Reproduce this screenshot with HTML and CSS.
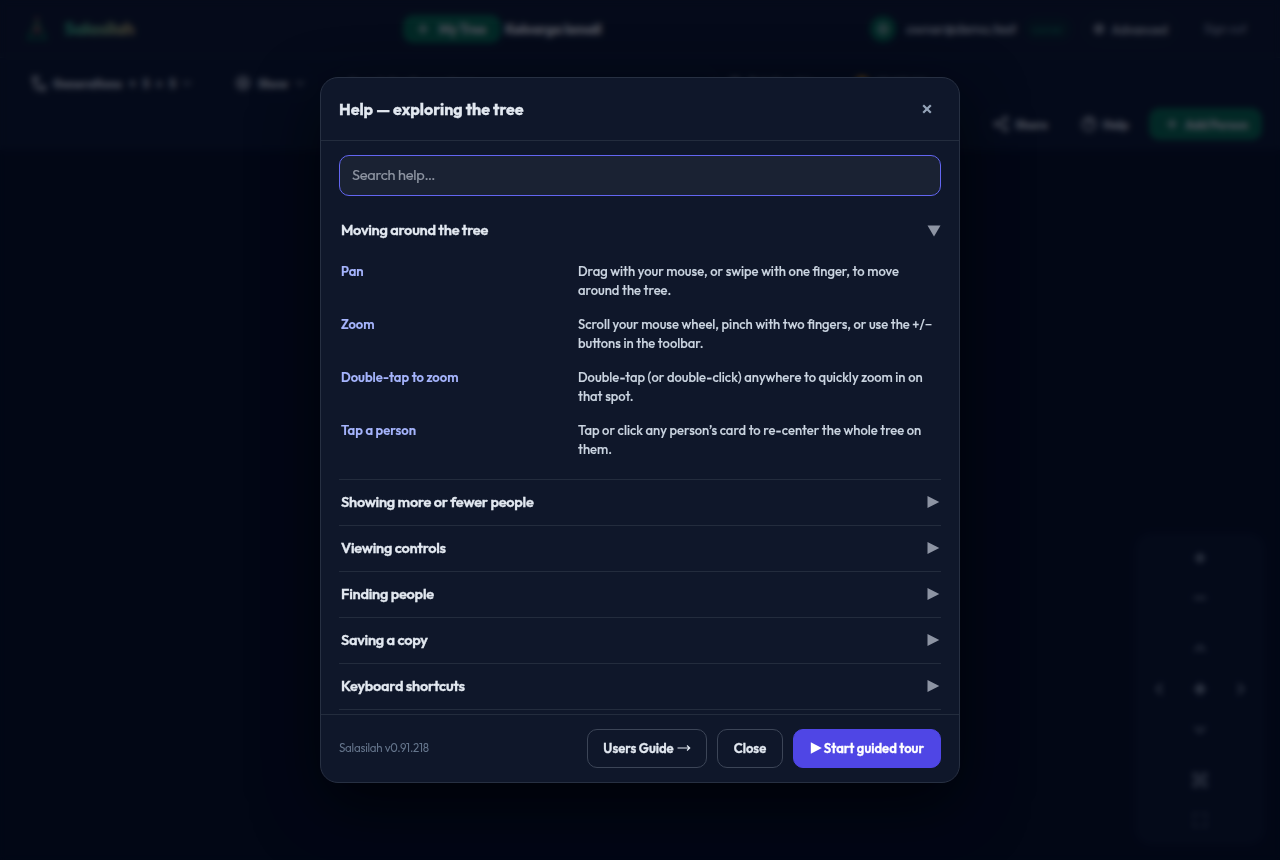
FILE: index.html
```html
<!DOCTYPE html>
<html lang="en">
<head>
<meta charset="utf-8">
<title>Salasilah</title>
<link rel="stylesheet" href="styles.css">
</head>
<body>
<div class="app">
  <header class="topbar">
    <div class="brand">
      <svg class="logo" width="26" height="28" viewBox="0 0 26 28" fill="none" stroke-width="2"><path d="M13 5 4 23h18z" stroke="#067a45"/><circle cx="13" cy="4" r="2" fill="#b45353"/><path d="M13 8v11M9 17l4-5 4 5" stroke="#b45353"/><path d="M3 24h20" stroke="#065f46" stroke-width="2"/></svg>
      <span class="brand-name">Salasilah</span>
    </div>
    <div class="tree-switch"><span class="btn-green my-tree"><svg class="ico" width="12" height="12" viewBox="0 0 12 12"><path d="M6 1v10M1 6h10"/></svg><span>My Tree</span></span><b class="tree-name">Keluarga Ismail</b></div>
    <div class="account">
      <span class="avatar">O</span><span class="mail">owner@demo.test</span><span class="role">owner</span>
      <span class="pill adv"><svg class="ico" width="12" height="12" viewBox="0 0 12 12"><circle cx="6" cy="6" r="4"/><circle cx="6" cy="6" r="1"/></svg>Advanced</span><span class="signout">Sign out</span>
    </div>
  </header>
  <div class="toolbar">
    <div class="tools">
      <span class="pill gen"><svg class="ico" width="16" height="16" viewBox="0 0 16 16"><path d="M2 2h5v4H2zM9 11h5v4H9zM4 6v7h5"/></svg><b class="gen-label">Generations</b><span>↑</span><b>5</b><span>↓</span><b>5</b><svg class="ico dim" width="10" height="10" viewBox="0 0 10 10"><path d="m1 3 4 4 4-4"/></svg></span>
      <span class="pill show"><svg class="ico" width="16" height="16" viewBox="0 0 16 16"><circle cx="8" cy="8" r="6"/><circle cx="8" cy="8" r="2"/></svg><b>Show</b><svg class="ico dim" width="10" height="10" viewBox="0 0 10 10"><path d="m1 3 4 4 4-4"/></svg></span>
      <span class="pill search-pill">Search family members</span>
      <span class="pill legend"><svg class="ico" width="12" height="12" viewBox="0 0 12 12"><circle cx="6" cy="6" r="4"/></svg>Relationship</span>
      <span class="pill spot"><span class="dot"></span>Highlight</span>
    </div>
    <div class="actions">
      <span class="pill share"><svg class="ico" width="16" height="16" viewBox="0 0 16 16"><circle cx="12.5" cy="3" r="2"/><circle cx="3.5" cy="8" r="2"/><circle cx="12.5" cy="13" r="2"/><path d="m5 7 6-3M5 9l6 3"/></svg><b>Share</b></span>
      <span class="pill help"><svg class="ico" width="16" height="16" viewBox="0 0 16 16"><circle cx="8" cy="8" r="6.5"/><path d="M6 6c0-3 4-2 4 0 0 1-2 1-2 3"/></svg><b>Help</b></span>
      <span class="btn-green add"><svg class="ico" width="12" height="12" viewBox="0 0 12 12"><path d="M6 1v10M1 6h10"/></svg><b>Add Person</b></span>
    </div>
  </div>
  <div class="navpad">
    <i><svg viewBox="0 0 14 14"><path d="M7 2v10M2 7h10" stroke-width="3"/></svg></i><i><svg viewBox="0 0 14 14"><path d="M1 7h12"/></svg></i><hr>
    <i><svg viewBox="0 0 14 14"><path d="m2 9 5-5 5 5"/></svg></i>
    <div class="navrow"><i><svg viewBox="0 0 14 14"><path d="M9 2 4 7l5 5"/></svg></i><i><svg viewBox="0 0 14 14"><circle cx="7" cy="7" r="3"/><path d="M7 1v12M1 7h12"/></svg></i><i><svg viewBox="0 0 14 14"><path d="m5 2 5 5-5 5"/></svg></i></div>
    <i><svg viewBox="0 0 14 14"><path d="m2 5 5 5 5-5"/></svg></i><hr>
    <i><svg viewBox="0 0 14 14"><path d="M1 5V1h4M9 1h4v4M13 9v4H9M5 13H1V9M2 2l10 10M12 2 2 12"/></svg></i>
    <i class="faint"><svg viewBox="0 0 14 14"><path d="M1 5V1h4M9 1h4v4M13 9v4H9M5 13H1V9"/></svg></i>
  </div>
</div>
<div class="overlay">
  <section class="modal">
    <div class="modal-head"><h2>Help — exploring the tree</h2><svg class="close-x" width="10" height="10" viewBox="0 0 10 10"><path d="m1.2 1.2 7.6 7.6M8.8 1.2 1.2 8.8"/></svg></div>
    <div class="modal-body">
      <div class="search">Search help…</div>
      <div class="section open">
        <div class="section-head"><span>Moving around the tree</span><svg class="caret down" width="14" height="12" viewBox="0 0 14 12"><path d="M.5.5h13L7 11.5z"/></svg></div>
        <dl>
          <dt>Pan</dt><dd>Drag with your mouse, or swipe with one finger, to move<br>around the tree.</dd>
          <dt>Zoom</dt><dd>Scroll your mouse wheel, pinch with two fingers, or use the +/−<br>buttons in the toolbar.</dd>
          <dt>Double-tap to zoom</dt><dd>Double-tap (or double-click) anywhere to quickly zoom in on<br>that spot.</dd>
          <dt>Tap a person</dt><dd>Tap or click any person’s card to re-center the whole tree on<br>them.</dd>
        </dl>
      </div>
      <div class="section"><div class="section-head"><span>Showing more or fewer people</span><svg class="caret" width="14" height="14" viewBox="0 0 14 14"><path d="M.5 1 12.3 7 .5 13z"/></svg></div></div>
      <div class="section"><div class="section-head"><span>Viewing controls</span><svg class="caret" width="14" height="14" viewBox="0 0 14 14"><path d="M.5 1 12.3 7 .5 13z"/></svg></div></div>
      <div class="section"><div class="section-head"><span>Finding people</span><svg class="caret" width="14" height="14" viewBox="0 0 14 14"><path d="M.5 1 12.3 7 .5 13z"/></svg></div></div>
      <div class="section"><div class="section-head"><span>Saving a copy</span><svg class="caret" width="14" height="14" viewBox="0 0 14 14"><path d="M.5 1 12.3 7 .5 13z"/></svg></div></div>
      <div class="section"><div class="section-head"><span>Keyboard shortcuts</span><svg class="caret" width="14" height="14" viewBox="0 0 14 14"><path d="M.5 1 12.3 7 .5 13z"/></svg></div></div>
      <div class="section"></div>
    </div>
    <div class="modal-foot">
      <span class="version">Salasilah v0.91.218</span>
      <button class="btn guide"><span>Users Guide</span><svg width="14" height="8" viewBox="0 0 14 8"><path d="M.5 4h12M10 1.5 12.7 4 10 6.5"/></svg></button>
      <button class="btn close">Close</button>
      <button class="btn primary"><svg width="12" height="12" viewBox="0 0 12 12"><path d="M.8.3 11.8 6 .8 11.7z"/></svg><span>Start guided tour</span></button>
    </div>
  </section>
</div>
</body>
</html>
```
FILE: styles.css
```css
* { box-sizing: border-box; }
body { margin: 0; height: 860px; overflow: hidden; background: #040a1a; color: #e2e8f0; font-family: Outfit, Lato, sans-serif; }
h2, dl, dd { margin: 0; }
b { font-weight: 700; }
.app { position: relative; height: 860px; font-size: 12px; }
.topbar { height: 58px; padding: 0 24px; display: grid; grid-template-columns: 379px 1fr auto; align-items: center; background: #0e1728; border-bottom: 1px solid #1e293b; }
.brand { display: flex; align-items: center; gap: 14px; }
.brand-name { font-size: 18px; font-weight: 800; letter-spacing: -.8px; background: linear-gradient(90deg, #34d399, #e0bd74); background-clip: text; color: transparent; }
.ico { fill: none; stroke: currentColor; stroke-width: 2; flex: none; }
.btn-green { background: #067a50; color: #fff; display: flex; align-items: center; font-weight: 700; }
.tree-switch { display: flex; align-items: center; gap: 4px; }
.my-tree { width: 98px; height: 28px; border-radius: 10px; padding-left: 14px; gap: 10px; font-size: 13px; -webkit-text-stroke: .3px; }
.tree-name { font-size: 14px; letter-spacing: -.25px; color: #fff; -webkit-text-stroke: .5px; }
.account { display: flex; align-items: center; color: #e8eef6; font-size: 13px; }
.avatar { width: 26px; height: 26px; border-radius: 50%; background: #067a50; color: #fff; display: grid; place-items: center; margin-right: 10px; font-weight: 700; }
.mail { width: 111px; font-size: 14px; font-weight: 500; letter-spacing: -.1px; -webkit-text-stroke: .2px; }
.role { width: 46px; height: 22px; margin: 0 13px 0 8px; border-radius: 11px; background: #0c252a; color: #109964; font-size: 11px; display: grid; place-items: center; }
.pill { display: flex; align-items: center; border: 1px solid #1a2437; border-radius: 14px; color: #f1f5f9; height: 30px; white-space: nowrap; -webkit-text-stroke: .4px; }
.adv { width: 92px; justify-content: center; gap: 7px; font-size: 12.5px; }
.signout { width: 80px; padding-left: 28px; white-space: nowrap; color: #ccd5e1; font-size: 12px; }
.toolbar { height: 92px; padding: 10px 18px 10px; background: #0b1528; display: flex; flex-direction: column; justify-content: space-between; }
.tools, .actions { display: flex; align-items: center; }
.gen { width: 184px; padding-left: 12px; gap: 6px; }
.gen-label { letter-spacing: 0; margin-right: 1px; }
.dim { opacity: .6; }
.show { margin-left: 22px; width: 90px; padding-left: 10px; gap: 7px; }
.search-pill { width: 380px; margin-left: 22px; padding-left: 12px; }
.legend { width: 130px; padding-left: 12px; gap: 8px; border-color: transparent; }
.spot { width: 110px; padding-left: 8px; gap: 8px; border-color: transparent; }
.dot { width: 14px; height: 14px; border-radius: 50%; background: #f59e0b; }
.actions { justify-content: flex-end; }
.share { width: 78px; padding-left: 9px; gap: 6px; }
.help { width: 68px; margin: 0 9px 0 11px; padding-left: 8px; gap: 6px; }
.add { width: 113px; height: 32px; border-radius: 10px; padding-left: 17px; gap: 7px; -webkit-text-stroke: .3px; }
.navpad { position: absolute; right: 15px; top: 533px; width: 130px; height: 312px; border: 1px solid #101a2c; border-radius: 16px; background: #0a1426; padding: 8px; display: flex; flex-direction: column; align-items: center; gap: 8px; }
.navpad hr { width: 32px; height: 3px; border: 0; margin: 0; }
.navpad i { width: 32px; height: 32px; border: 1px solid #131d31; border-radius: 50%; display: grid; place-items: center; flex: none; }
.navpad .faint { opacity: .45; }
.navpad svg { width: 14px; height: 14px; fill: none; stroke: #b4bfcf; stroke-width: 2.2; }
.navrow { display: flex; gap: 8px; }
.overlay { position: absolute; inset: 0; display: grid; place-items: center; background: rgba(2, 6, 20, .7); backdrop-filter: blur(3.3px); }
.modal { width: 640px; height: 706px; display: flex; flex-direction: column; background: #0f172a; border: 1px solid #273042; border-radius: 18px; box-shadow: 0 24px 64px rgba(0, 0, 0, .6); overflow: hidden; }
.modal-head { height: 63px; flex: none; padding: 0 27px 0 18px; display: flex; align-items: center; justify-content: space-between; border-bottom: 1px solid #232c3d; }
.modal-head h2 { font-size: 16px; font-weight: 700; line-height: 22px; -webkit-text-stroke: .3px; }
.close-x { fill: none; stroke: #94a3b8; stroke-width: 2.2; }
.modal-body { flex: 1; min-height: 0; overflow: hidden; padding: 14px 18px 0; }
.search { height: 41px; border: 1px solid #6366f1; border-radius: 10px; background: #1a2233; color: #8f96a3; padding: 0 12px 2px; display: flex; align-items: center; font-size: 14.5px; letter-spacing: -.25px; margin-bottom: 11px; -webkit-text-stroke: .15px; }
.section { border-top: 1px solid #232c3d; }
.section.open { border-top-color: transparent; height: 272px; }
.section-head { height: 45px; padding: 0 0 2px 2px; display: flex; align-items: center; justify-content: space-between; font-size: 14.5px; letter-spacing: -.24px; font-weight: 600; }
.section-head span { -webkit-text-stroke: .3px; padding-bottom: 1px; }
.caret { fill: #8d94a3; margin-top: 1px; }
.caret.down { margin-top: 2px; }
dl { display: grid; grid-template-columns: 237px 1fr; row-gap: 15px; padding: 9px 0 0 2px; font-size: 13px; line-height: 19px; white-space: nowrap; }
dt { color: #a5b4fc; font-weight: 600; -webkit-text-stroke: .15px; }
dd { color: #cbd5e1; font-weight: 500; -webkit-text-stroke: .12px; }
.modal-foot { height: 68px; flex: none; border-top: 1px solid #232c3d; padding: 0 18px; display: flex; align-items: center; gap: 10px; }
.version { margin-right: auto; padding-bottom: 2px; font-size: 11.5px; letter-spacing: -.2px; color: #64748b; }
.btn { height: 39px; border: 1px solid #3c4557; border-radius: 10px; background: transparent; color: #e2e8f0; font: 600 13px Outfit, Lato, sans-serif; -webkit-text-stroke: .3px; padding: 0 0 1px; display: flex; align-items: center; justify-content: center; white-space: nowrap; }
.guide { width: 120px; gap: 3px; }
.guide svg { fill: none; stroke: #e2e8f0; stroke-width: 1.2; }
.close { width: 66px; }
.primary { width: 148px; background: #4f46e5; border-color: #4f46e5; color: #fff; gap: 2px; }
.primary svg { fill: #fff; }
```
